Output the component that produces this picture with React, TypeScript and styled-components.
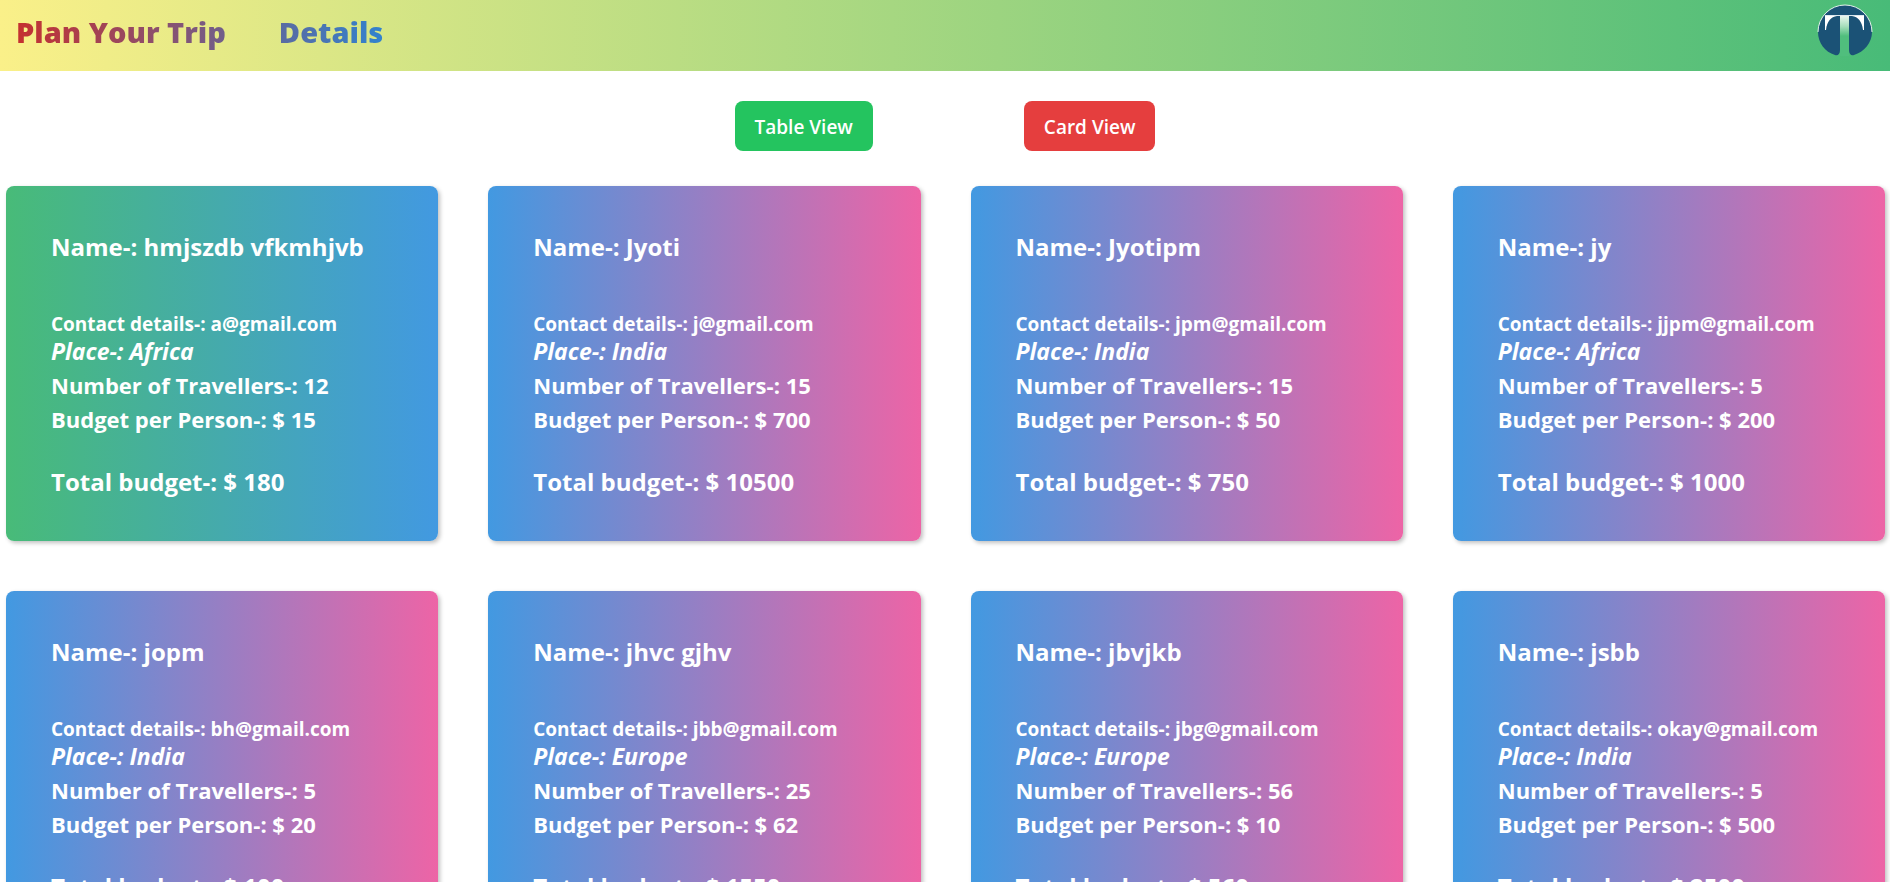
import React from "react";
import styled, { createGlobalStyle } from "styled-components";

const GlobalStyle = createGlobalStyle`
  *, *::before, *::after { box-sizing: border-box; }
  body {
    margin: 0;
    background: #ffffff;
    font-family: "Segoe UI", "Open Sans", "Noto Sans", sans-serif;
  }
  h2, h3, h4, p { margin: 0; }
`;

const Page = styled.div`
  min-height: 100vh;
`;

const Header = styled.header`
  display: flex;
  align-items: flex-start;
  justify-content: space-between;
  height: 71px;
  padding: 4px 17px 0 16px;
  background: linear-gradient(to right, #faf089, #48bb78);
`;

const Nav = styled.nav`
  display: flex;
  gap: 53px;
  padding-top: 8px;
  background: linear-gradient(to right, #c53030, #3182ce);
  background-clip: text;
  -webkit-background-clip: text;
`;

const NavLink = styled.a`
  color: transparent;
  font-size: 29px;
  line-height: 40px;
  font-weight: 800;
  text-decoration: none;
`;

const Logo = styled.svg`
  width: 56px;
  height: 52px;
`;

const Switcher = styled.div`
  display: flex;
  justify-content: center;
  gap: 151px;
  padding: 30px 0 35px;
`;

const ViewButton = styled.button<{ $color: string }>`
  height: 50px;
  padding: 2px 20px 0;
  border: 0;
  border-radius: 8px;
  background: ${(p) => p.$color};
  color: #ffffff;
  font-family: inherit;
  font-size: 19px;
  font-weight: 600;
  cursor: pointer;
`;

const CardGrid = styled.main`
  display: grid;
  grid-template-columns: repeat(4, 1fr);
  gap: 50px;
  padding: 0 5px 50px 6px;
`;

const Card = styled.article<{ $first: boolean }>`
  padding: 43px 45px 41px;
  border-radius: 8px;
  background: ${(p) =>
    p.$first
      ? "linear-gradient(to right, #48bb78, #4299e1)"
      : "linear-gradient(to right, #4299e1, #ed64a6)"};
  box-shadow: 2px 2px 4px rgba(0, 0, 0, 0.25);
  color: #ffffff;
  font-weight: 700;
  white-space: nowrap;
`;

const Name = styled.h2`
  margin-bottom: 45px;
  font-size: 24px;
  line-height: 36px;
`;

const Contact = styled.p`
  font-size: 19px;
  line-height: 28px;
`;

const Place = styled.p`
  margin-bottom: 4px;
  font-size: 23px;
  line-height: 26px;
  font-style: italic;
`;

const Detail = styled.h4`
  font-size: 22px;
  line-height: 34px;
`;

const Total = styled.h3`
  margin-top: 28px;
  font-size: 24px;
  line-height: 36px;
`;

interface Trip {
  name: string;
  contact: string;
  place: string;
  travellers: number;
  budget: number;
  total: number;
}

const trips: Trip[] = [
  { name: "hmjszdb vfkmhjvb", contact: "a@gmail.com", place: "Africa", travellers: 12, budget: 15, total: 180 },
  { name: "Jyoti", contact: "j@gmail.com", place: "India", travellers: 15, budget: 700, total: 10500 },
  { name: "Jyotipm", contact: "jpm@gmail.com", place: "India", travellers: 15, budget: 50, total: 750 },
  { name: "jy", contact: "jjpm@gmail.com", place: "Africa", travellers: 5, budget: 200, total: 1000 },
  { name: "jopm", contact: "bh@gmail.com", place: "India", travellers: 5, budget: 20, total: 100 },
  { name: "jhvc gjhv", contact: "jbb@gmail.com", place: "Europe", travellers: 25, budget: 62, total: 1550 },
  { name: "jbvjkb", contact: "jbg@gmail.com", place: "Europe", travellers: 56, budget: 10, total: 560 },
  { name: "jsbb", contact: "okay@gmail.com", place: "India", travellers: 5, budget: 500, total: 2500 },
];

function TripLogo() {
  return (
    <Logo viewBox="0 0 56 52" role="img" aria-label="Trip logo">
      <defs>
        <linearGradient id="stem" x1="0" y1="0" x2="0" y2="1">
          <stop offset="0" stopColor="#e9f7ee" />
          <stop offset="0.25" stopColor="#a8dfbd" />
          <stop offset="0.5" stopColor="#50be7d" />
        </linearGradient>
      </defs>
      {/* disc, split at the bottom by the stem of the T */}
      <path
        d="M28 1A27 27 0 0 1 55 28C55 39 47 48 37 51C34 52 32 50 32 46V12H23V46C23 50 21 52 18 51C8 48 1 39 1 28A27 27 0 0 1 28 1Z"
        fill="#1b5276"
      />
      <path d="M1 28A27 27 0 0 1 55 28" fill="none" stroke="#e3f2ea" strokeWidth="1" />
      <rect x="23" y="12" width="9" height="40" fill="url(#stem)" />
      <rect x="8" y="11" width="39" height="1" fill="#dce8ee" />
      <path d="M8 12H20C14 13 10 17 9 26H8Z" fill="#ffffff" />
      <path d="M47 12H35C41 13 45 17 46 26H47Z" fill="#ffffff" />
    </Logo>
  );
}

export default function App() {
  return (
    <Page>
      <GlobalStyle />
      <Header>
        <Nav>
          <NavLink href="#plan">Plan Your Trip</NavLink>
          <NavLink href="#details">Details</NavLink>
        </Nav>
        <TripLogo />
      </Header>
      <Switcher>
        <ViewButton $color="#24c45f">Table View</ViewButton>
        <ViewButton $color="#e53e3e">Card View</ViewButton>
      </Switcher>
      <CardGrid>
        {trips.map((t, i) => (
          <Card key={t.name} $first={i === 0}>
            <Name>Name-: {t.name}</Name>
            <Contact>Contact details-: {t.contact}</Contact>
            <Place>Place-: {t.place}</Place>
            <Detail>Number of Travellers-: {t.travellers}</Detail>
            <Detail>Budget per Person-: $ {t.budget}</Detail>
            <Total>Total budget-: $ {t.total}</Total>
          </Card>
        ))}
      </CardGrid>
    </Page>
  );
}
